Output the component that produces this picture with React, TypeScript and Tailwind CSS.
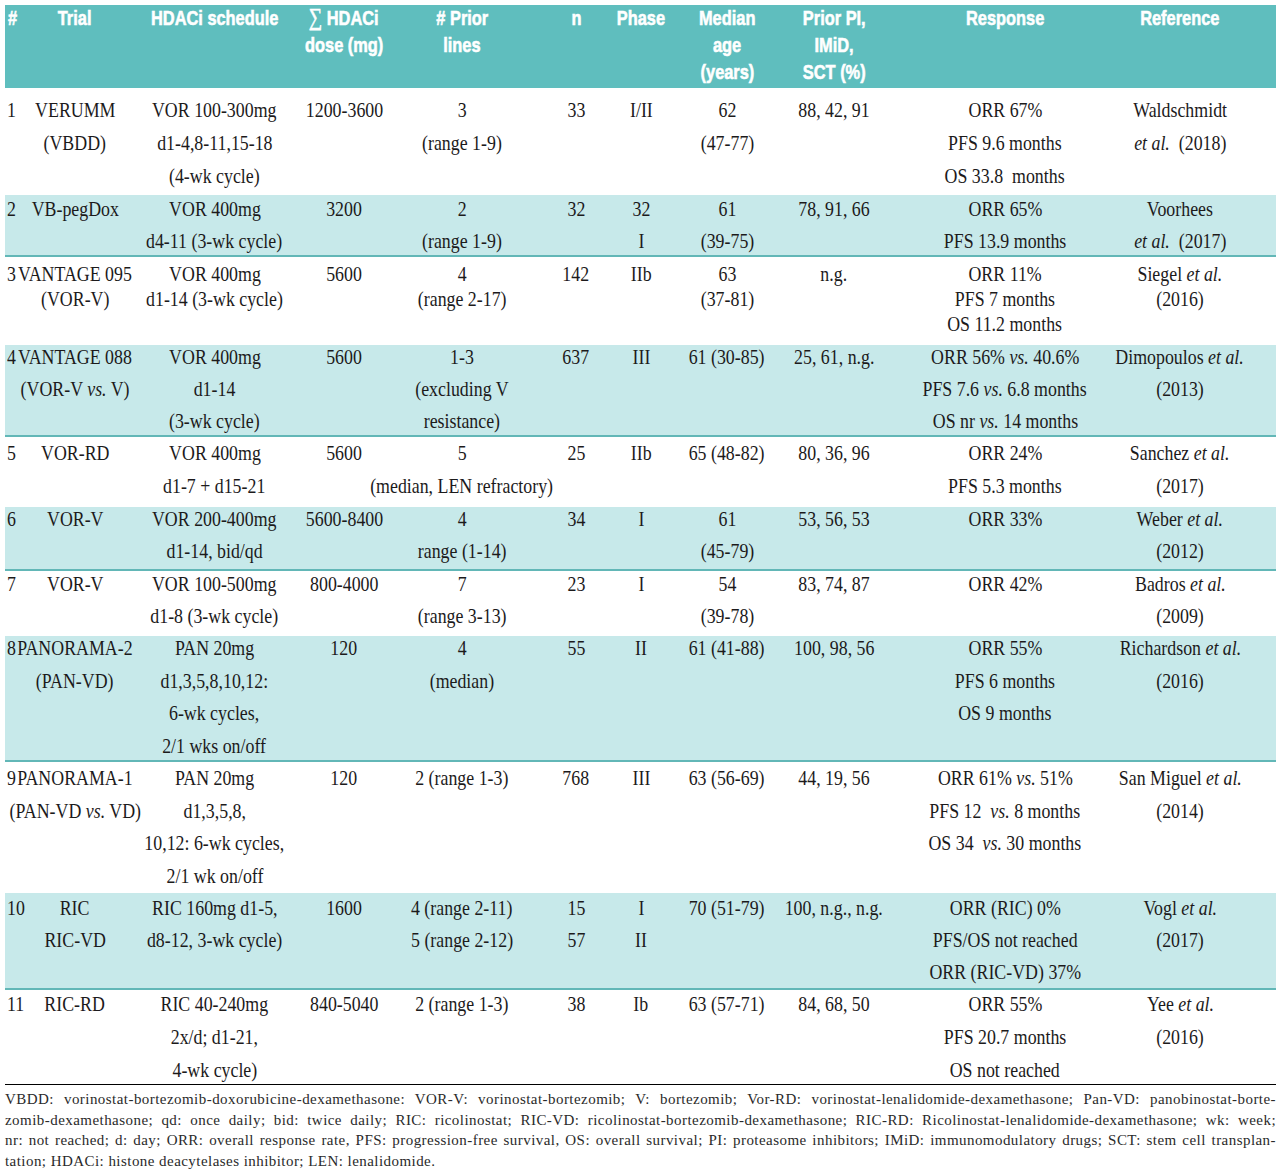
import type { ReactNode } from "react";

type Row = {
  num: string;
  box: string;
  inner: string;
  cells: ReactNode[][];
};

const grid =
  "grid grid-cols-[18px_104px_175px_84px_152px_76px_54px_118px_96px_246px_104px_44px]";

const vs = <i>vs.</i>;
const etal = <i>et al.</i>;

const rows: Row[] = [
  {
    num: "1",
    box: "h-[107px] pt-[6px] leading-[33px] bg-white",
    inner: "",
    cells: [
      ["VERUMM", "(VBDD)"],
      ["VOR 100-300mg", "d1-4,8-11,15-18", "(4-wk cycle)"],
      ["1200-3600"],
      ["3", "(range 1-9)"],
      ["33"],
      ["I/II"],
      ["62", "(47-77)"],
      ["88, 42, 91"],
      ["ORR 67%", "PFS 9.6 months", "OS 33.8\u00a0 months"],
      ["Waldschmidt", <>{etal}{"\u00a0 "}(2018)</>],
    ],
  },
  {
    num: "2",
    box: "h-[62px] leading-[32px] bg-[#c7e9ea] border-b-2 border-[#62b7b7]",
    inner: "mt-[-2px]",
    cells: [
      ["VB-pegDox"],
      ["VOR 400mg", "d4-11 (3-wk cycle)"],
      ["3200"],
      ["2", "(range 1-9)"],
      ["32"],
      ["32", "I"],
      ["61", "(39-75)"],
      ["78, 91, 66"],
      ["ORR 65%", "PFS 13.9 months"],
      ["Voorhees", <>{etal}{"\u00a0 "}(2017)</>],
    ],
  },
  {
    num: "3",
    box: "h-[88px] pt-[5px] leading-[25px] bg-white",
    inner: "",
    cells: [
      ["VANTAGE 095", "(VOR-V)"],
      ["VOR 400mg", "d1-14 (3-wk cycle)"],
      ["5600"],
      ["4", "(range 2-17)"],
      ["142"],
      ["IIb"],
      ["63", "(37-81)"],
      ["n.g."],
      ["ORR 11%", "PFS 7 months", "OS 11.2 months"],
      [<>Siegel {etal}</>, "(2016)"],
    ],
  },
  {
    num: "4",
    box: "h-[92px] leading-[32px] bg-[#c7e9ea] border-b-2 border-[#62b7b7]",
    inner: "mt-[-4px]",
    cells: [
      ["VANTAGE 088", <>(VOR-V {vs} V)</>],
      ["VOR 400mg", "d1-14", "(3-wk cycle)"],
      ["5600"],
      ["1-3", "(excluding V", "resistance)"],
      ["637"],
      ["III"],
      ["61 (30-85)"],
      ["25, 61, n.g."],
      [
        <>ORR 56% {vs} 40.6%</>,
        <>PFS 7.6 {vs} 6.8 months</>,
        <>OS nr {vs} 14 months</>,
      ],
      [<>Dimopoulos {etal}</>, "(2013)"],
    ],
  },
  {
    num: "5",
    box: "h-[70px] leading-[33px] bg-white",
    inner: "",
    cells: [
      ["VOR-RD"],
      ["VOR 400mg", "d1-7 + d15-21"],
      ["5600"],
      ["5", "(median, LEN refractory)"],
      ["25"],
      ["IIb"],
      ["65 (48-82)"],
      ["80, 36, 96"],
      ["ORR 24%", "PFS 5.3 months"],
      [<>Sanchez {etal}</>, "(2017)"],
    ],
  },
  {
    num: "6",
    box: "h-[64px] leading-[32px] bg-[#c7e9ea] border-b-2 border-[#62b7b7]",
    inner: "mt-[-4px]",
    cells: [
      ["VOR-V"],
      ["VOR 200-400mg", "d1-14, bid/qd"],
      ["5600-8400"],
      ["4", "range (1-14)"],
      ["34"],
      ["I"],
      ["61", "(45-79)"],
      ["53, 56, 53"],
      ["ORR 33%"],
      [<>Weber {etal}</>, "(2012)"],
    ],
  },
  {
    num: "7",
    box: "h-[65px] leading-[32px] bg-white",
    inner: "mt-[-3px]",
    cells: [
      ["VOR-V"],
      ["VOR 100-500mg", "d1-8 (3-wk cycle)"],
      ["800-4000"],
      ["7", "(range 3-13)"],
      ["23"],
      ["I"],
      ["54", "(39-78)"],
      ["83, 74, 87"],
      ["ORR 42%"],
      [<>Badros {etal}</>, "(2009)"],
    ],
  },
  {
    num: "8",
    box: "h-[126px] leading-[32.5px] bg-[#c7e9ea] border-b-2 border-[#62b7b7]",
    inner: "mt-[-4px]",
    cells: [
      ["PANORAMA-2", "(PAN-VD)"],
      ["PAN 20mg", "d1,3,5,8,10,12:", "6-wk cycles,", "2/1 wks on/off"],
      ["120"],
      ["4", "(median)"],
      ["55"],
      ["II"],
      ["61 (41-88)"],
      ["100, 98, 56"],
      ["ORR 55%", "PFS 6 months", "OS 9 months"],
      [<>Richardson {etal}</>, "(2016)"],
    ],
  },
  {
    num: "9",
    box: "h-[131px] leading-[32.5px] bg-white",
    inner: "",
    cells: [
      ["PANORAMA-1", <>(PAN-VD {vs} VD)</>],
      ["PAN 20mg", "d1,3,5,8,", "10,12: 6-wk cycles,", "2/1 wk on/off"],
      ["120"],
      ["2 (range 1-3)"],
      ["768"],
      ["III"],
      ["63 (56-69)"],
      ["44, 19, 56"],
      [
        <>ORR 61% {vs} 51%</>,
        <>PFS 12{"\u00a0 "}{vs} 8 months</>,
        <>OS 34{"\u00a0 "}{vs} 30 months</>,
      ],
      [<>San Miguel {etal}</>, "(2014)"],
    ],
  },
  {
    num: "10",
    box: "h-[97px] leading-[32px] bg-[#c7e9ea] border-b-2 border-[#62b7b7]",
    inner: "mt-[-1px]",
    cells: [
      ["RIC", "RIC-VD"],
      ["RIC 160mg d1-5,", "d8-12, 3-wk cycle)"],
      ["1600"],
      ["4 (range 2-11)", "5 (range 2-12)"],
      ["15", "57"],
      ["I", "II"],
      ["70 (51-79)"],
      ["100, n.g., n.g."],
      ["ORR (RIC) 0%", "PFS/OS not reached", "ORR (RIC-VD) 37%"],
      [<>Vogl {etal}</>, "(2017)"],
    ],
  },
  {
    num: "11",
    box: "h-[94px] leading-[33px] bg-white",
    inner: "mt-[-2px]",
    cells: [
      ["RIC-RD"],
      ["RIC 40-240mg", "2x/d; d1-21,", "4-wk cycle)"],
      ["840-5040"],
      ["2 (range 1-3)"],
      ["38"],
      ["Ib"],
      ["63 (57-71)"],
      ["84, 68, 50"],
      ["ORR 55%", "PFS 20.7 months", "OS not reached"],
      [<>Yee {etal}</>, "(2016)"],
    ],
  },
];

const headers: ReactNode[][] = [
  ["Trial"],
  ["HDACi schedule"],
  [<><span className="font-normal text-[24px] font-['Liberation_Serif',serif]">∑</span> HDACi</>, "dose (mg)"],
  ["# Prior", "lines"],
  ["n"],
  ["Phase"],
  ["Median", "age", "(years)"],
  ["Prior PI,", "IMiD,", "SCT (%)"],
  ["Response"],
  ["Reference"],
];

const notes = [
  "VBDD: vorinostat-bortezomib-doxorubicine-dexamethasone: VOR-V: vorinostat-bortezomib; V: bortezomib; Vor-RD: vorinostat-lenalidomide-dexamethasone; Pan-VD: panobinostat-borte-",
  "zomib-dexamethasone;  qd: once daily; bid: twice daily; RIC: ricolinostat; RIC-VD: ricolinostat-bortezomib-dexamethasone; RIC-RD: Ricolinostat-lenalidomide-dexamethasone; wk: week;",
  "nr: not reached; d: day;  ORR: overall response rate, PFS: progression-free survival, OS: overall survival; PI: proteasome inhibitors; IMiD: immunomodulatory drugs; SCT: stem cell transplan-",
];

// the source face is a condensed serif / condensed bold sans; squeeze the installed ones
function Cell({ lines, inner, squeeze }: { lines: ReactNode[]; inner: string; squeeze: string }) {
  return (
    <div className={`flex flex-col items-center whitespace-nowrap ${inner}`}>
      {lines.map((l, i) => (
        <div key={i} className={squeeze}>
          {l}
        </div>
      ))}
    </div>
  );
}

export default function App() {
  return (
    <div className="w-[1280px] bg-white pt-[5px] pl-[5px] text-[#1c1a1b]">
      <div className="w-[1271px]">
        <div
          className={`${grid} h-[83px] bg-[#5fbebe] text-white font-bold text-[21px] leading-[27px] [-webkit-text-stroke:0.6px_white] font-['Liberation_Sans',Arial,sans-serif]`}
        >
          <div className="pl-[3px] mt-[-1px]">
            <div className="origin-left scale-x-[0.78]">#</div>
          </div>
          {headers.map((h, i) => (
            <Cell key={i} lines={h} inner="mt-[-1px]" squeeze="scale-x-[0.78]" />
          ))}
          <div />
        </div>

        <div className="font-['Liberation_Serif',serif] text-[21px]">
          {rows.map((r) => (
            <div key={r.num} className={`${grid} ${r.box}`}>
              <div className={`pl-[2px] whitespace-nowrap ${r.inner}`}>
                <div className="origin-left scale-x-[0.85]">{r.num}</div>
              </div>
              {r.cells.map((c, i) => (
                <Cell key={i} lines={c} inner={r.inner} squeeze="scale-x-[0.85]" />
              ))}
              <div />
            </div>
          ))}
        </div>

        <div className="border-t border-black pt-[4px] font-['Liberation_Serif',serif] text-[15px] leading-[20.5px] tracking-[0.45px] text-[#2a2a2a]">
          {notes.map((n, i) => (
            <div key={i} className="text-justify [text-align-last:justify]">
              {n}
            </div>
          ))}
          <div>tation; HDACi: histone deacytelases inhibitor; LEN: lenalidomide.</div>
        </div>
      </div>
    </div>
  );
}
